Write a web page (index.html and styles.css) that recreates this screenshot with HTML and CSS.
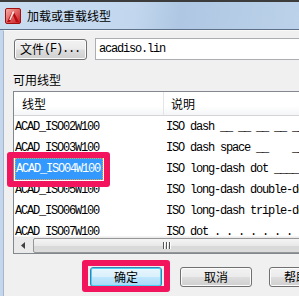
FILE: index.html
```html
<!DOCTYPE html>
<html>
<head>
<meta charset="utf-8">
<link rel="stylesheet" href="styles.css">
</head>
<body>
<div class="win">
  <div class="titlebar">
    <svg class="appicon" width="16" height="16" viewBox="0 0 16 16">
      <defs>
        <linearGradient id="ig" x1="0" y1="0" x2="1" y2="1">
          <stop offset="0" stop-color="#f7b0a8"/>
          <stop offset="1" stop-color="#c8141a"/>
        </linearGradient>
      </defs>
      <rect x="0.5" y="0.5" width="15" height="15" rx="1.5" fill="url(#ig)" stroke="#a01010"/>
      <polygon points="8,2 14,14 11,14 8,7.5 5,14 2,14" fill="#b80d12"/>
      <polygon points="8,2 9.3,4.6 5.6,12 4.2,12" fill="#fbe0dc"/>
    </svg>
    <span class="title">加载或重载线型</span>
  </div>
  <div class="frame">
    <div class="content">
      <div class="filerow">
        <div class="btn filebtn"><span class="cjk">文件</span><span class="mono">(F)...</span></div>
        <div class="field"><span class="mono">acadiso.lin</span></div>
      </div>
      <div class="label">可用线型</div>
      <div class="listbox">
        <div class="header">
          <div class="hcell c1">线型</div>
          <div class="hcell c2">说明</div>
        </div>
        <div class="rows">
          <div class="row"><div class="cell c1">ACAD_ISO02W100</div><div class="cell c2">ISO dash __ __ __ __ __</div></div>
          <div class="row"><div class="cell c1">ACAD_ISO03W100</div><div class="cell c2">ISO dash space __&nbsp;&nbsp;&nbsp;&nbsp;__</div></div>
          <div class="row"><div class="cell c1"><span class="sel">ACAD_ISO04W100</span></div><div class="cell c2">ISO long-dash dot ____</div></div>
          <div class="row"><div class="cell c1">ACAD_ISO05W100</div><div class="cell c2">ISO long-dash double-dot</div></div>
          <div class="row"><div class="cell c1">ACAD_ISO06W100</div><div class="cell c2">ISO long-dash triple-dot</div></div>
          <div class="row"><div class="cell c1">ACAD_ISO07W100</div><div class="cell c2">ISO dot . . . . . . . . .</div></div>
        </div>
        <div class="hscroll">
          <div class="arrow"><svg width="4" height="7" viewBox="0 0 4 7"><polygon points="4,0 0,3.5 4,7" fill="#404040"/></svg></div>
          <div class="thumb"><span class="grip"></span><span class="grip"></span><span class="grip"></span></div>
        </div>
        <div class="mark rowmark"></div>
      </div>
      <div class="buttons">
        <div class="okwrap">
          <div class="btn okbtn">确定</div>
          <div class="mark btnmark"></div>
        </div>
        <div class="btn">取消</div>
        <div class="btn helpbtn"><span>帮助</span><span class="mono">(H)</span></div>
      </div>
    </div>
  </div>
</div>
</body>
</html>
```

FILE: styles.css
```css
html, body {
  margin: 0;
  padding: 0;
  width: 299px;
  height: 296px;
  overflow: hidden;
  background: #f0f0f0;
}
.win {
  width: 299px;
  height: 296px;
  display: flex;
  flex-direction: column;
  font-family: "Noto Sans CJK SC", sans-serif;
  font-size: 12px;
  color: #000;
}
.titlebar {
  height: 27px;
  border-top: 2px solid #3c3c3c;
  border-bottom: 1px solid #5f7089;
  background: linear-gradient(100deg, #c9dcf0 0%, #c2d7ee 45%, #afc7e3 60%, #bcd2ea 100%);
  display: flex;
  align-items: center;
  padding-left: 5px;
  gap: 6px;
}
.appicon { flex: none; margin-top: 1px; }
.title {
  font-size: 12px;
  line-height: 14px;
}
.frame {
  flex: 1;
  display: flex;
  border-left: 3px solid #c3d6ec;
}
.content {
  flex: 1;
  border-left: 1px solid #a6b7cc;
  border-top: 1px solid #f8f8f8;
  padding: 7px 0 0 9px;
  overflow: hidden;
}
.mono {
  font-family: "Liberation Mono", monospace;
  font-size: 12px;
  letter-spacing: -1.2px;
}
.filerow {
  display: flex;
  align-items: center;
  height: 22px;
}
.btn {
  flex: none;
  box-sizing: border-box;
  height: 21px;
  border: 1px solid #707070;
  border-radius: 3px;
  background: linear-gradient(#f2f2f2 0%, #ebebeb 48%, #dddddd 52%, #cfcfcf 100%);
  box-shadow: inset 0 0 0 1px #fcfcfc;
  display: flex;
  align-items: center;
  justify-content: center;
  font-size: 12px;
  line-height: 14px;
  white-space: nowrap;
}
.filebtn {
  width: 73px;
  margin-left: 1px;
  justify-content: flex-start;
  padding-left: 5px;
}
.field {
  flex: none;
  box-sizing: border-box;
  margin-left: 8px;
  height: 22px;
  width: 220px;
  background: #fff;
  border: 1px solid #abadb3;
  border-right: none;
  padding-left: 3px;
  display: flex;
  align-items: center;
}
.label {
  margin-top: 12px;
  height: 16px;
  line-height: 16px;
}
.listbox {
  position: relative;
  margin-top: 3px;
  width: 320px;
  border: 1px solid #828790;
  background: #fff;
}
.header {
  display: flex;
  height: 23px;
  border-bottom: 1px solid #d5d5d5;
  background: linear-gradient(#ffffff 0%, #ffffff 60%, #f4f5f7 100%);
}
.hcell {
  display: flex;
  align-items: center;
  font-size: 12px;
}
.header .c1 {
  width: 150px;
  padding-left: 8px;
  box-sizing: border-box;
  border-right: 1px solid #e3e5e7;
}
.header .c2 {
  padding-left: 7px;
}
.rows {
  height: 120px;
  overflow: hidden;
}
.row {
  display: flex;
  height: 21px;
  align-items: center;
  font-family: "Liberation Mono", monospace;
  font-size: 12px;
  letter-spacing: -1.2px;
  white-space: pre;
}
.row .c1 {
  width: 151px;
  padding-left: 1px;
  box-sizing: border-box;
}
.row .c2 {
  padding-left: 1px;
}
.sel {
  display: inline-block;
  background: #3399ff;
  color: #fff;
  padding: 4px 3px 4px 1px;
  outline: 1px dotted #e8a040;
  outline-offset: -1px;
}
.hscroll {
  height: 17px;
  display: flex;
  align-items: center;
  background: #eaeaea;
  border-top: 1px solid #f4f4f4;
  box-sizing: border-box;
}
.arrow {
  width: 17px;
  height: 17px;
  display: flex;
  align-items: center;
  justify-content: center;
}
.thumb {
  box-sizing: border-box;
  margin-left: 2px;
  height: 15px;
  width: 290px;
  border: 1px solid #979797;
  border-radius: 2px;
  background: linear-gradient(#f4f4f4 0%, #e9e9e9 50%, #d8d8d8 51%, #dcdcdc 100%);
  display: flex;
  align-items: center;
  padding-left: 129px;
  gap: 1px;
}
.grip {
  width: 1px;
  height: 7px;
  background: #555;
  border-right: 1px solid #fff;
}
.mark {
  position: absolute;
  border: 6px solid #f2145c;
  border-radius: 3px;
  pointer-events: none;
}
.rowmark {
  left: -7px;
  top: 60px;
  width: 91px;
  height: 23px;
}
.buttons {
  display: flex;
  margin-top: 13px;
  margin-left: 77px;
  gap: 18px;
}
.buttons .btn {
  width: 72px;
  height: 20px;
}
.buttons .helpbtn {
  margin-left: -1px;
}
.okwrap {
  position: relative;
  flex: none;
}
.okbtn {
  border-color: #3c7fb1;
  background: linear-gradient(#eaf6fd 0%, #d9f0fc 48%, #bee6fd 52%, #a7d9f5 100%);
  box-shadow: inset 0 0 0 1px #48d2f5;
}
.btnmark {
  left: -8px;
  top: -7px;
  width: 76px;
  height: 20px;
}
```
